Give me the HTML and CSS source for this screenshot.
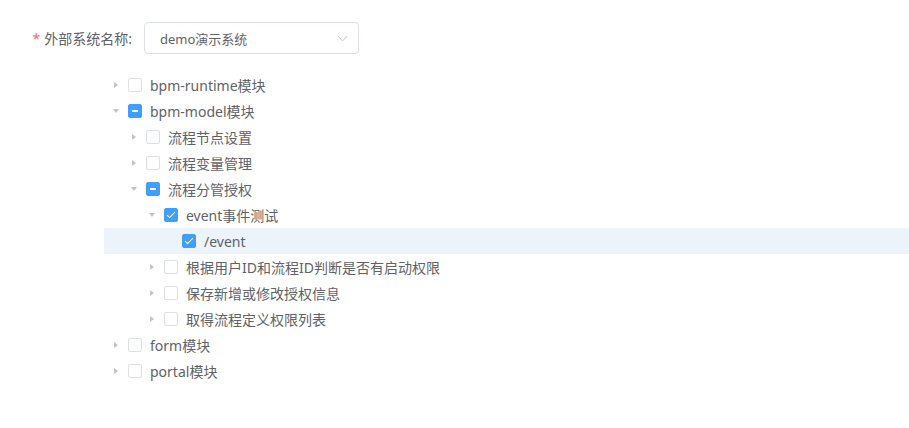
FILE: index.html
```html
<!DOCTYPE html>
<html lang="zh-CN">
<head>
    <meta charset="UTF-8">
    <title>外部系统权限</title>
    <link rel="stylesheet" href="styles.css">
</head>
<body>
    <div class="page">
        <div class="form-item">
            <label class="form-label"><span class="required">*</span>外部系统名称:</label>
            <div class="select">
                <span class="select-value">demo演示系统</span>
                <svg class="select-arrow" width="11" height="7" viewBox="0 0 11 7">
                    <path d="M0.5 0.8 L5.5 5.8 L10.5 0.8" fill="none" stroke="#c0c4cc" stroke-width="1"/>
                </svg>
            </div>
        </div>

        <div class="tree">
            <div class="node-content lv1">
                <span class="caret"></span>
                <span class="checkbox"></span>
                <span class="node-label">bpm-runtime模块</span>
            </div>
            <div class="node-content lv1">
                <span class="caret open"></span>
                <span class="checkbox half"></span>
                <span class="node-label">bpm-model模块</span>
            </div>
            <div class="node-content lv2">
                <span class="caret"></span>
                <span class="checkbox"></span>
                <span class="node-label">流程节点设置</span>
            </div>
            <div class="node-content lv2">
                <span class="caret"></span>
                <span class="checkbox"></span>
                <span class="node-label">流程变量管理</span>
            </div>
            <div class="node-content lv2">
                <span class="caret open"></span>
                <span class="checkbox half"></span>
                <span class="node-label">流程分管授权</span>
            </div>
            <div class="node-content lv3">
                <span class="caret open"></span>
                <span class="checkbox checked"></span>
                <span class="node-label">event事件测试</span>
            </div>
            <div class="node-content lv4 current">
                <span class="caret leaf"></span>
                <span class="checkbox checked"></span>
                <span class="node-label">/event</span>
            </div>
            <div class="node-content lv3">
                <span class="caret"></span>
                <span class="checkbox"></span>
                <span class="node-label">根据用户ID和流程ID判断是否有启动权限</span>
            </div>
            <div class="node-content lv3">
                <span class="caret"></span>
                <span class="checkbox"></span>
                <span class="node-label">保存新增或修改授权信息</span>
            </div>
            <div class="node-content lv3">
                <span class="caret"></span>
                <span class="checkbox"></span>
                <span class="node-label">取得流程定义权限列表</span>
            </div>
            <div class="node-content lv1">
                <span class="caret"></span>
                <span class="checkbox"></span>
                <span class="node-label">form模块</span>
            </div>
            <div class="node-content lv1">
                <span class="caret"></span>
                <span class="checkbox"></span>
                <span class="node-label">portal模块</span>
            </div>
        </div>
    </div>
</body>
</html>
```

FILE: styles.css
```css
body {
    margin: 0;
    background: #fff;
    color: #606266;
    font-family: "Noto Sans", "Noto Sans CJK SC", sans-serif;
    font-size: 14px;
}

.page {
    padding-top: 22px;
}

.form-item {
    display: flex;
    align-items: center;
    height: 32px;
}

.form-label {
    width: 144px;
    box-sizing: border-box;
    padding-right: 12px;
    text-align: right;
    font-size: 14px;
    color: #606266;
}

.required {
    color: #f56c6c;
    margin-right: 4px;
}

.select {
    width: 215px;
    height: 32px;
    box-sizing: border-box;
    border: 1px solid #dcdfe6;
    border-radius: 4px;
    display: flex;
    align-items: center;
    justify-content: space-between;
    padding: 0 10px 0 15px;
}

.select-value {
    font-size: 13px;
    color: #606266;
}

.tree {
    margin: 18px 0 0 104px;
}

.node-content {
    display: flex;
    align-items: center;
    height: 26px;
}

.node-content.current {
    background: #ecf3fa;
}

.lv2 { padding-left: 18px; }
.lv3 { padding-left: 36px; }
.lv4 { padding-left: 54px; }

.caret {
    width: 24px;
    height: 26px;
    display: flex;
    align-items: center;
    justify-content: center;
}

.caret::before {
    content: "";
    display: block;
    border-left: 4px solid #c0c4cc;
    border-top: 3.5px solid transparent;
    border-bottom: 3.5px solid transparent;
}

.caret.open::before {
    border-top: 4px solid #c0c4cc;
    border-left: 3.5px solid transparent;
    border-right: 3.5px solid transparent;
    border-bottom: 0;
}

.caret.leaf::before {
    display: none;
}

.checkbox {
    position: relative;
    width: 14px;
    height: 14px;
    box-sizing: border-box;
    border: 1px solid #dcdfe6;
    border-radius: 2px;
    background: #fff;
    margin-right: 8px;
}

.checkbox.half,
.checkbox.checked {
    background: #409eff;
    border-color: #409eff;
}

.checkbox.half::after {
    content: "";
    position: absolute;
    left: 3px;
    top: 5px;
    width: 6px;
    height: 2px;
    background: #fff;
}

.checkbox.checked::after {
    content: "";
    position: absolute;
    left: 4px;
    top: 1px;
    width: 3px;
    height: 7px;
    border: 1px solid #fff;
    border-top: 0;
    border-left: 0;
    transform: rotate(45deg);
}

.node-label {
    font-size: 14px;
    color: #606266;
}
```
